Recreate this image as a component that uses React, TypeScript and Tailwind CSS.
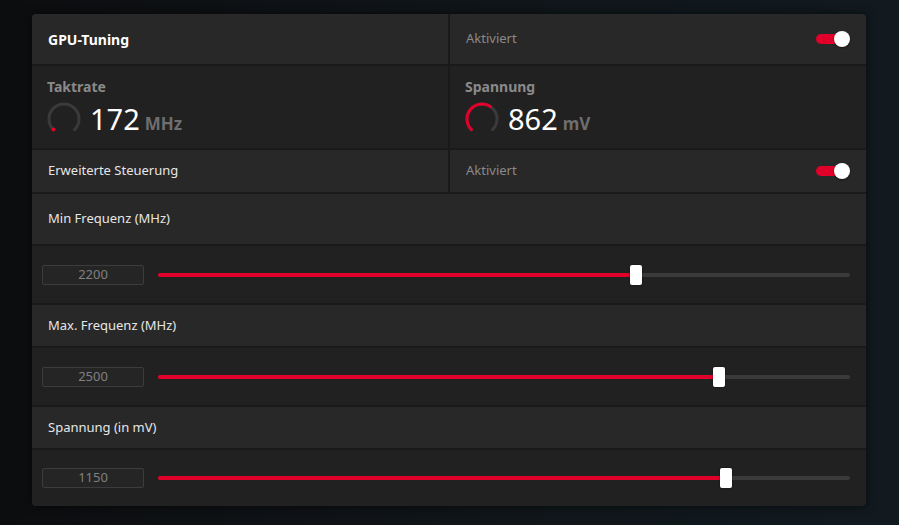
import React from "react";

const RED = "#e1002a";

function Toggle() {
  return (
    <div className="relative h-[16px] w-[34px]">
      <div className="absolute left-0 top-[3px] h-[10px] w-[30px] rounded-full bg-[#e1002a]" />
      <div className="absolute right-0 top-0 h-[16px] w-[16px] rounded-full bg-white shadow-[0_1px_2px_rgba(0,0,0,0.5)]" />
    </div>
  );
}

function Gauge({ red }: { red: "dot" | "arc" }) {
  return (
    <svg width="34" height="34" viewBox="0 0 34 34" className="shrink-0">
      <path
        d="M 6.39 27.61 A 15 15 0 1 1 27.61 27.61"
        fill="none"
        stroke="#3a3a3a"
        strokeWidth="3"
        strokeLinecap="round"
      />
      {red === "arc" ? (
        <path
          d="M 6.39 27.61 A 15 15 0 0 1 25.39 4.57"
          fill="none"
          stroke={RED}
          strokeWidth="3"
          strokeLinecap="round"
        />
      ) : (
        <circle cx="6.39" cy="27.61" r="2" fill={RED} />
      )}
    </svg>
  );
}

function Metric({ label, value, unit, red }: { label: string; value: string; unit: string; red: "dot" | "arc" }) {
  return (
    <div className="flex min-w-0 flex-col bg-[#212121] pl-[15px] pt-[11px]">
      <div className="text-[14px] font-bold leading-[20px] text-[#8a8a8a]">{label}</div>
      <div className="mt-[4px] flex items-center">
        <Gauge red={red} />
        <div className="ml-[9px] flex items-baseline">
          <span className="text-[29px] leading-[36px] text-white">{value}</span>
          <span className="ml-[5px] text-[17px] font-bold text-[#6e6e6e]">{unit}</span>
        </div>
      </div>
    </div>
  );
}

function Header({ text, h }: { text: string; h: string }) {
  return (
    <div className={`flex items-center bg-[#282828] pl-[16px] text-[13px] text-[#e6e6e6] ${h}`}>{text}</div>
  );
}

function SliderRow({ value, pct, h }: { value: string; pct: number; h: string }) {
  return (
    <div className={`flex items-center bg-[#212121] pl-[10px] pr-[16px] ${h}`}>
      <div className="flex h-[20px] w-[102px] items-center justify-center rounded-[2px] border border-[#3c3c3c] bg-[#252525] text-[13px] text-[#808080]">
        {value}
      </div>
      <div className="relative ml-[14px] h-[20px] flex-1">
        <div className="absolute left-0 right-0 top-[8px] h-[4px] rounded-full bg-[#3a3a3a]" />
        <div
          className="absolute left-0 top-[8px] h-[4px] rounded-full bg-[#e1002a]"
          style={{ width: `${pct}%` }}
        />
        <div
          className="absolute top-0 h-[20px] w-[12px] -translate-x-1/2 rounded-[2px] bg-white shadow-[0_0_2px_rgba(0,0,0,0.6)]"
          style={{ left: `${pct}%` }}
        />
      </div>
    </div>
  );
}

export default function App() {
  return (
    <div
      className="h-[525px] w-[899px] overflow-hidden bg-[linear-gradient(90deg,#0c0d0f_0%,#0f1317_40%,#111a1f_100%)] pl-[32px] pt-[14px]"
      style={{ fontFamily: '"Noto Sans", "Open Sans", sans-serif' }}
    >
      <div className="flex w-[834px] flex-col gap-[2px] overflow-hidden rounded-[4px] bg-[#1a1a1a] shadow-[0_0_8px_rgba(0,0,0,0.6)]">
        {/* Row 1 */}
        <div className="grid h-[50px] grid-cols-2 gap-[2px]">
          <div className="flex items-center bg-[#282828] pl-[16px] text-[14px] font-bold text-white">GPU-Tuning</div>
          <div className="flex items-center justify-between bg-[#282828] pl-[16px] pr-[16px] text-[13px] text-[#8a8a8a]">
            <span>Aktiviert</span>
            <Toggle />
          </div>
        </div>
        {/* Row 2 */}
        <div className="grid h-[82px] grid-cols-2 gap-[2px]">
          <Metric label="Taktrate" value="172" unit="MHz" red="dot" />
          <Metric label="Spannung" value="862" unit="mV" red="arc" />
        </div>
        {/* Row 3 */}
        <div className="grid h-[42px] grid-cols-2 gap-[2px]">
          <div className="flex items-center bg-[#282828] pl-[16px] text-[13px] text-[#e6e6e6]">Erweiterte Steuerung</div>
          <div className="flex items-center justify-between bg-[#282828] pl-[16px] pr-[16px] text-[13px] text-[#8a8a8a]">
            <span>Aktiviert</span>
            <Toggle />
          </div>
        </div>
        <Header text="Min Frequenz (MHz)" h="h-[50px]" />
        <SliderRow value="2200" pct={69.1} h="h-[57px]" />
        <Header text="Max. Frequenz (MHz)" h="h-[41px]" />
        <SliderRow value="2500" pct={81.1} h="h-[57px]" />
        <Header text="Spannung (in mV)" h="h-[41px]" />
        <SliderRow value="1150" pct={82.1} h="h-[56px]" />
      </div>
    </div>
  );
}
